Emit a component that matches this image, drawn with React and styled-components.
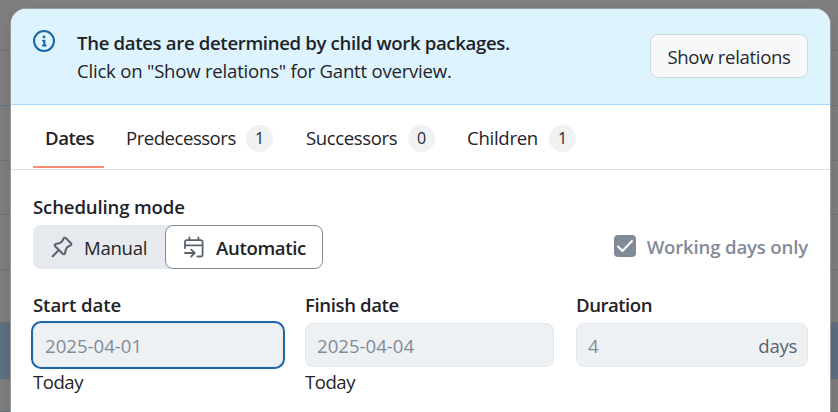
import React from 'react';
import styled, { createGlobalStyle, css } from 'styled-components';

const GlobalStyle = createGlobalStyle`
  * { box-sizing: border-box; }
  body {
    margin: 0;
    overflow: hidden;
    color: #1f2328;
    font-family: "Open Sans", "Noto Sans", sans-serif;
    font-size: 18.6px;
    line-height: 28px;
  }
`;

const Page = styled.div`
  position: relative;
  width: 838px;
  height: 412px;
  overflow: hidden;
  background: #7f7f7f;
`;

const TableRow = styled.div`
  height: ${(p) => p.$height}px;
  background: ${(p) => (p.$selected ? '#5f7080' : '#7f7f7f')};
  border-bottom: 1px solid ${(p) => (p.$selected ? '#5f7080' : '#6d7276')};
`;

const Dialog = styled.main`
  position: absolute;
  inset: 9px 8px auto 11px;
  height: 430px;
  overflow: hidden;
  border-radius: 15px 15px 0 0;
  background: #fff;
  box-shadow: 0 0 0 1px #989b9e, 0 6px 20px rgba(0, 0, 0, 0.13);
`;

const Text = styled.span`
  font-weight: ${(p) => (p.$bold ? 600 : 400)};
  letter-spacing: ${(p) => p.$spacing || 0}px;
  white-space: nowrap;
`;

const Banner = styled.section`
  display: flex;
  align-items: flex-start;
  height: 96px;
  padding: 20px 22px 0;
  background: #ddf4ff;
  border-bottom: 1px solid #a5d8ff;

  > svg {
    margin-top: 1px;
  }
`;

const BannerCopy = styled.div`
  display: flex;
  flex: 1;
  flex-direction: column;
  margin-left: 22px;
`;

const Button = styled.button`
  width: 158px;
  height: 44px;
  margin-top: 5px;
  padding: 1px 0 0;
  border: 1px solid #d1d9e0;
  border-radius: 8px;
  background: #f6f8fa;
  color: #25292e;
  font: inherit;
`;

const Tabs = styled.nav`
  display: flex;
  height: 65px;
  padding-left: 22px;
  border-bottom: 1px solid #dbe2e8;
`;

const Tab = styled.div`
  display: flex;
  align-items: center;
  width: ${(p) => p.$width}px;
  height: 63px;
  margin-right: ${(p) => p.$gap || 0}px;
  padding: 3px 0 0 ${(p) => (p.$active ? 12 : 0)}px;
  ${(p) => p.$active && css`border-bottom: 2px solid #fd8c73; padding-top: 5px;`}
`;

const Counter = styled.span`
  display: flex;
  align-items: center;
  justify-content: center;
  width: 27px;
  height: 27px;
  margin-left: auto;
  border-radius: 50%;
  background: #eff1f3;
  color: #25292e;
  font-size: 16px;
`;

const Form = styled.section`
  padding: 23px 22px 0;
`;

const Label = styled.div`
  height: 32px;
`;

const ModeRow = styled.div`
  display: flex;
  justify-content: space-between;
  height: 44px;
`;

const Segmented = styled.div`
  display: flex;
  width: 290px;
  border-radius: 8px;
  background: #e6eaef;
`;

const Segment = styled.div`
  display: flex;
  align-items: center;
  width: ${(p) => (p.$selected ? 158 : 132)}px;
  padding-left: ${(p) => (p.$selected ? 17 : 18)}px;
  gap: 11px;
  border: ${(p) => (p.$selected ? '1px solid #818b98' : '0')};
  border-radius: 8px;
  background: ${(p) => (p.$selected ? '#fff' : 'transparent')};

  ${Text} {
    padding-top: 2px;
  }
`;

const Check = styled.div`
  display: flex;
  align-items: center;
  gap: 11px;
  height: 42px;
  color: #818b98;

  ${Text} {
    padding-top: 2px;
  }
`;

const CheckBox = styled.span`
  display: flex;
  width: 22px;
  height: 22px;
  border-radius: 4px;
  background: #818b98;
`;

const Fields = styled.div`
  display: grid;
  grid-template-columns: 250px 249px 232px;
  column-gap: 22px;
  margin-top: 22px;
`;

const Field = styled.div`
  display: flex;
  flex-direction: column;
`;

const Input = styled.div`
  display: flex;
  align-items: center;
  justify-content: space-between;
  height: 44px;
  padding: 2px 10px 0 11px;
  border: 1px solid #e0e6eb;
  border-radius: 8px;
  background: #eef1f4;
  color: #818b98;
  ${(p) => p.$focused && css`border-color: #e4e5ed; box-shadow: 0 0 0 2px #1b67a8;`}
`;

const Caption = styled(Text)`
  margin-top: 1px;
`;

const Unit = styled(Text)`
  color: #59636e;
`;

const Icon = styled.svg`
  display: block;
  flex-shrink: 0;
  width: 22px;
  height: 22px;
  color: ${(p) => p.$color || '#59636e'};
`;

const InfoIcon = () => (
  <Icon viewBox="0 0 16 16" fill="currentColor" $color="#1a67a8">
    <path d="M0 8a8 8 0 1 1 16 0A8 8 0 0 1 0 8Zm8-6.5a6.5 6.5 0 1 0 0 13 6.5 6.5 0 0 0 0-13ZM6.5 7.75A.75.75 0 0 1 7.25 7h1a.75.75 0 0 1 .75.75v2.75h.25a.75.75 0 0 1 0 1.5h-2a.75.75 0 0 1 0-1.5h.25v-2h-.25a.75.75 0 0 1-.75-.75ZM8 6a1 1 0 1 1 0-2 1 1 0 0 1 0 2Z" />
  </Icon>
);

const PinIcon = () => (
  <Icon viewBox="0 0 16 16" fill="currentColor">
    <path d="m11.294.984 3.722 3.722a1.75 1.75 0 0 1-.504 2.826l-1.327.613a3.089 3.089 0 0 0-1.707 2.084l-.584 2.454c-.317 1.332-1.972 1.8-2.94.832L5.75 11.311 1.78 15.28a.749.749 0 1 1-1.06-1.06l3.969-3.97-2.204-2.204c-.968-.968-.5-2.623.832-2.94l2.454-.584a3.08 3.08 0 0 0 2.084-1.707l.613-1.327a1.75 1.75 0 0 1 2.826-.504ZM6.283 9.723l2.732 2.731a.25.25 0 0 0 .42-.119l.584-2.454a4.586 4.586 0 0 1 2.537-3.098l1.328-.613a.25.25 0 0 0 .072-.404l-3.722-3.722a.25.25 0 0 0-.404.072l-.613 1.328a4.584 4.584 0 0 1-3.098 2.537l-2.454.584a.25.25 0 0 0-.119.42l2.731 2.732Z" />
  </Icon>
);

const CalendarArrowIcon = () => (
  <Icon viewBox="0 0 22 22" fill="none" stroke="currentColor" strokeWidth="1.8" strokeLinecap="round" strokeLinejoin="round">
    <path d="M2 12.2V6a1.8 1.8 0 0 1 1.8-1.8h14a1.8 1.8 0 0 1 1.8 1.8v12.7a1.8 1.8 0 0 1-1.8 1.8h-3.4" />
    <path d="M6.4 1.3v2.7M15.4 1.3v2.7M2 9.3h17.4M2 17h9.4M8.2 13.6l3.5 3.4-3.5 3.5" />
  </Icon>
);

const CheckIcon = () => (
  <Icon viewBox="0 0 22 22" fill="none" stroke="currentColor" strokeWidth="2" strokeLinecap="round" strokeLinejoin="round" $color="#fff">
    <path d="m4 11.5 4.5 4.5L18 6" />
  </Icon>
);

const rows = [51, 55, 55, 54, 55];

export default function App() {
  return (
    <>
      <GlobalStyle />
      <Page>
        {rows.map((height, i) => (
          <TableRow key={i} $height={height} />
        ))}
        <TableRow $height={53} />
        <TableRow $height={56} $selected />
        <TableRow $height={33} />
        <Dialog>
          <Banner>
            <InfoIcon />
            <BannerCopy>
              <Text $bold $spacing={-0.34}>The dates are determined by child work packages.</Text>
              <Text $spacing={-0.23}>Click on "Show relations" for Gantt overview.</Text>
            </BannerCopy>
            <Button><Text $spacing={-0.33}>Show relations</Text></Button>
          </Banner>
          <Tabs>
            <Tab $active $width={71} $gap={22}><Text $bold $spacing={-0.5}>Dates</Text></Tab>
            <Tab $width={147} $gap={33}><Text $spacing={-0.5}>Predecessors</Text><Counter>1</Counter></Tab>
            <Tab $width={129} $gap={32}><Text $spacing={-0.4}>Successors</Text><Counter>0</Counter></Tab>
            <Tab $width={109}><Text $spacing={-0.3}>Children</Text><Counter>1</Counter></Tab>
          </Tabs>
          <Form>
            <Label><Text $bold $spacing={-0.15}>Scheduling mode</Text></Label>
            <ModeRow>
              <Segmented>
                <Segment><PinIcon /><Text $spacing={-0.3}>Manual</Text></Segment>
                <Segment $selected><CalendarArrowIcon /><Text $bold $spacing={-0.35}>Automatic</Text></Segment>
              </Segmented>
              <Check><CheckBox><CheckIcon /></CheckBox><Text $bold $spacing={-0.17}>Working days only</Text></Check>
            </ModeRow>
            <Fields>
              <Field>
                <Label><Text $bold $spacing={-0.1}>Start date</Text></Label>
                <Input $focused><Text>2025-04-01</Text></Input>
                <Caption $spacing={-0.5}>Today</Caption>
              </Field>
              <Field>
                <Label><Text $bold $spacing={-0.4}>Finish date</Text></Label>
                <Input><Text>2025-04-04</Text></Input>
                <Caption $spacing={-0.5}>Today</Caption>
              </Field>
              <Field>
                <Label><Text $bold $spacing={-0.5}>Duration</Text></Label>
                <Input><Text>4</Text><Unit $spacing={-0.3}>days</Unit></Input>
              </Field>
            </Fields>
          </Form>
        </Dialog>
      </Page>
    </>
  );
}
